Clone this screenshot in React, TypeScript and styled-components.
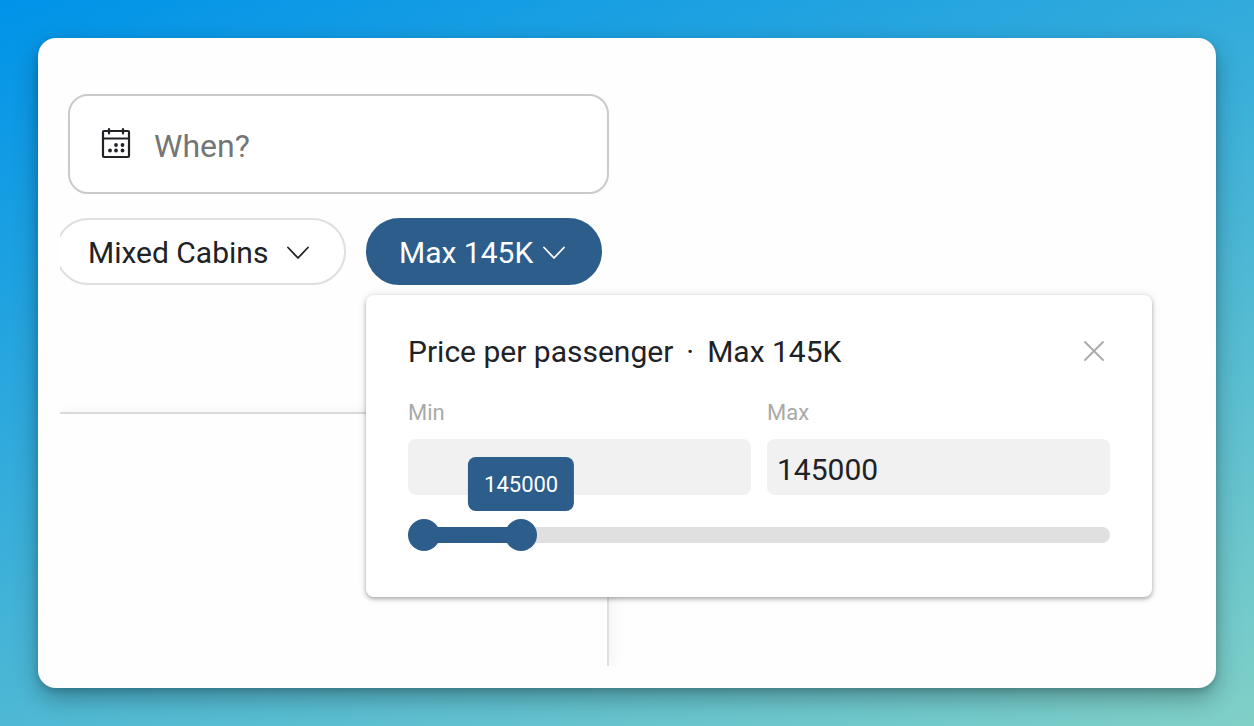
import React, { useState } from "react";
import styled, { createGlobalStyle, css } from "styled-components";

const PRICE_LIMIT = 1000000;
const BLUE = "#2c5d8b";
const INK = "#212226";

const GlobalStyle = createGlobalStyle`
  *, *::before, *::after { box-sizing: border-box; }
  body { margin: 0; }
  body, button, input { font-family: Roboto, "Liberation Sans", sans-serif; color: ${INK}; }
`;

const Page = styled.div`
  display: flex;
  min-height: 100vh;
  padding: 38px;
  background: linear-gradient(160deg, #0093e9 0%, #80d0c7 100%);
`;

const Card = styled.main`
  display: flex;
  flex: 1;
  min-width: 0;
  padding: 22px;
  border-radius: 18px;
  background: #fefefe;
  box-shadow: 0 10px 24px rgba(0, 0, 0, 0.3), 0 3px 6px rgba(0, 0, 0, 0.14);
`;

const Content = styled.div`
  display: flex;
  flex: 1;
  flex-direction: column;
  min-width: 0;
  overflow: hidden;
`;

const Search = styled.form`
  display: flex;
  flex-direction: column;
  gap: 24px;
  width: 549px;
  padding: 34px 0 127px 8px;
  border-bottom: 2px solid #dfdfdf;
`;

const Results = styled.section`
  flex: 1;
  width: 549px;
  border-right: 2px solid #dfdfdf;
  box-shadow: 2px 0 16px rgba(0, 0, 0, 0.06);
`;

const DateField = styled.label`
  display: flex;
  align-items: center;
  gap: 23px;
  height: 100px;
  padding: 0 31px;
  border: 2px solid #cacaca;
  border-radius: 20px;
  background: #fff;
`;

const DateInput = styled.input`
  flex: 1;
  min-width: 0;
  height: 60px;
  padding: 4px 0 0;
  border: 0;
  outline: 0;
  background: transparent;
  font-size: 32px;
  &::placeholder { color: #757575; opacity: 1; }
`;

const Chips = styled.div`
  display: flex;
  gap: 20px;
  margin-left: -13px;
`;

const ChipAnchor = styled.div`
  position: relative;
`;

const Chip = styled.button<{ $width: number; $active?: boolean }>`
  display: flex;
  align-items: center;
  justify-content: space-between;
  gap: 8px;
  min-width: ${(p) => p.$width}px;
  height: 67px;
  padding: 2px 35px 0 31px;
  border: 2px solid #dfdfdf;
  border-radius: 34px;
  background: #fff;
  font-size: 30px;
  white-space: nowrap;
  cursor: pointer;
  ${(p) => p.$active && css`
    border-color: ${BLUE};
    background: ${BLUE};
    color: #fff;
  `}
`;

const Popover = styled.div`
  position: absolute;
  top: calc(100% + 10px);
  left: 0;
  width: 786px;
  padding: 34px 42px 46px;
  border-radius: 8px;
  background: #fff;
  box-shadow: 0 2px 4px rgba(0, 0, 0, 0.3), 0 0 10px rgba(0, 0, 0, 0.1);
`;

const PopoverHead = styled.div`
  display: flex;
  align-items: flex-start;
  justify-content: space-between;
  height: 46px;
`;

const Title = styled.h2`
  display: flex;
  gap: 13px;
  margin: 0;
  font-size: 30px;
  font-weight: 400;
  line-height: 46px;
  white-space: nowrap;
`;

const CloseButton = styled.button`
  display: flex;
  padding: 12px 6px;
  border: 0;
  background: transparent;
  cursor: pointer;
`;

const Fields = styled.div`
  display: grid;
  grid-template-columns: 1fr 1fr;
  gap: 16px;
  margin-top: 20px;
`;

const Field = styled.label`
  display: flex;
  flex-direction: column;
  gap: 8px;
  color: #a9a9a9;
  font-size: 22px;
  line-height: 36px;
`;

const PriceInput = styled.input`
  width: 100%;
  height: 56px;
  padding: 4px 10px 0;
  border: 0;
  border-radius: 8px;
  outline: 0;
  background: #f1f1f1;
  font-size: 30px;
`;

const Slider = styled.div`
  position: relative;
  display: flex;
  align-items: center;
  height: 32px;
  margin-top: 24px;
`;

const Track = styled.div`
  flex: 1;
  height: 16px;
  padding: 0 16px;
  border-radius: 8px;
  background: #e0e0e0;
`;

const Fill = styled.div`
  height: 16px;
  background: ${BLUE};
`;

const thumb = css`
  width: 32px;
  height: 32px;
  border: 0;
  border-radius: 50%;
  background: ${BLUE};
  pointer-events: auto;
  cursor: pointer;
`;

const Range = styled.input`
  position: absolute;
  inset: 0;
  width: 100%;
  height: 32px;
  margin: 0;
  appearance: none;
  background: transparent;
  pointer-events: none;
  &::-webkit-slider-thumb { appearance: none; ${thumb} }
  &::-moz-range-thumb { ${thumb} }
`;

const BubbleRail = styled.div`
  position: absolute;
  inset: 0 16px;
  pointer-events: none;
`;

const Bubble = styled.output`
  position: absolute;
  bottom: calc(100% + 8px);
  transform: translateX(-50%);
  padding: 1px 16px 0;
  border-radius: 8px;
  background: ${BLUE};
  color: #fff;
  font-size: 22px;
  line-height: 53px;
`;

const CalendarIcon = () => (
  <svg width="30" height="34" viewBox="0 0 30 34" fill="none" stroke={INK} strokeWidth="2.200" strokeLinecap="round" aria-hidden="true">
    <rect x="2" y="4" width="26" height="26" rx="1" />
    <path d="M2 11.500h26M8 2v4.500M22 2v4.500" />
    <g fill={INK} stroke="none">
      <circle cx="15" cy="18" r="1.900" />
      <circle cx="21.500" cy="18" r="1.900" />
      <circle cx="9" cy="23.500" r="1.900" />
      <circle cx="15" cy="23.500" r="1.900" />
      <circle cx="21.500" cy="23.500" r="1.900" />
    </g>
  </svg>
);

const ChevronIcon = () => (
  <svg width="22" height="14" viewBox="0 0 22 14" fill="none" stroke="currentColor" strokeWidth="1.800" strokeLinecap="round" strokeLinejoin="round" aria-hidden="true">
    <path d="M1 1.500 11 12 21 1.500" />
  </svg>
);

const CloseIcon = () => (
  <svg width="20" height="20" viewBox="0 0 20 20" fill="none" stroke="#a9a9a9" strokeWidth="1.800" strokeLinecap="round" aria-hidden="true">
    <path d="M1 1l18 18M19 1 1 19" />
  </svg>
);

export default function App() {
  const [min, setMin] = useState(0);
  const [max, setMax] = useState(145000);
  const [open, setOpen] = useState(true);
  const percent = (value: number) => (value / PRICE_LIMIT) * 100;
  const parse = (text: string) => Math.min(PRICE_LIMIT, Number(text.replace(/\D/g, "")));
  const short = `Max ${Math.round(max / 1000)}K`;

  return (
    <Page>
      <GlobalStyle />
      <Card>
        <Content>
          <Search onSubmit={(e) => e.preventDefault()}>
            <DateField>
              <CalendarIcon />
              <DateInput type="text" placeholder="When?" aria-label="When?" />
            </DateField>
            <Chips>
              <Chip type="button" $width={291}>
                Mixed Cabins
                <ChevronIcon />
              </Chip>
              <ChipAnchor>
                <Chip type="button" $width={236} $active aria-expanded={open} onClick={() => setOpen(!open)}>
                  {short}
                  <ChevronIcon />
                </Chip>
                {open && (
                  <Popover role="dialog" aria-label="Price per passenger">
                    <PopoverHead>
                      <Title>
                        <span>Price per passenger</span>
                        <span>·</span>
                        <span>{short}</span>
                      </Title>
                      <CloseButton type="button" aria-label="Close" onClick={() => setOpen(false)}>
                        <CloseIcon />
                      </CloseButton>
                    </PopoverHead>
                    <Fields>
                      <Field>
                        Min
                        <PriceInput type="text" value={min || ""} onChange={(e) => setMin(Math.min(parse(e.target.value), max))} />
                      </Field>
                      <Field>
                        Max
                        <PriceInput type="text" value={max} onChange={(e) => setMax(parse(e.target.value))} />
                      </Field>
                    </Fields>
                    <Slider>
                      <Track>
                        <Fill style={{ marginLeft: `${percent(min)}%`, width: `${percent(max - min)}%` }} />
                      </Track>
                      <Range type="range" aria-label="Minimum price" max={PRICE_LIMIT} step={1000} value={min}
                        onChange={(e) => setMin(Math.min(Number(e.target.value), max))} />
                      <Range type="range" aria-label="Maximum price" max={PRICE_LIMIT} step={1000} value={max}
                        onChange={(e) => setMax(Math.max(Number(e.target.value), min))} />
                      <BubbleRail>
                        <Bubble style={{ left: `${percent(max)}%` }}>{max}</Bubble>
                      </BubbleRail>
                    </Slider>
                  </Popover>
                )}
              </ChipAnchor>
            </Chips>
          </Search>
          <Results aria-label="Results" />
        </Content>
      </Card>
    </Page>
  );
}
